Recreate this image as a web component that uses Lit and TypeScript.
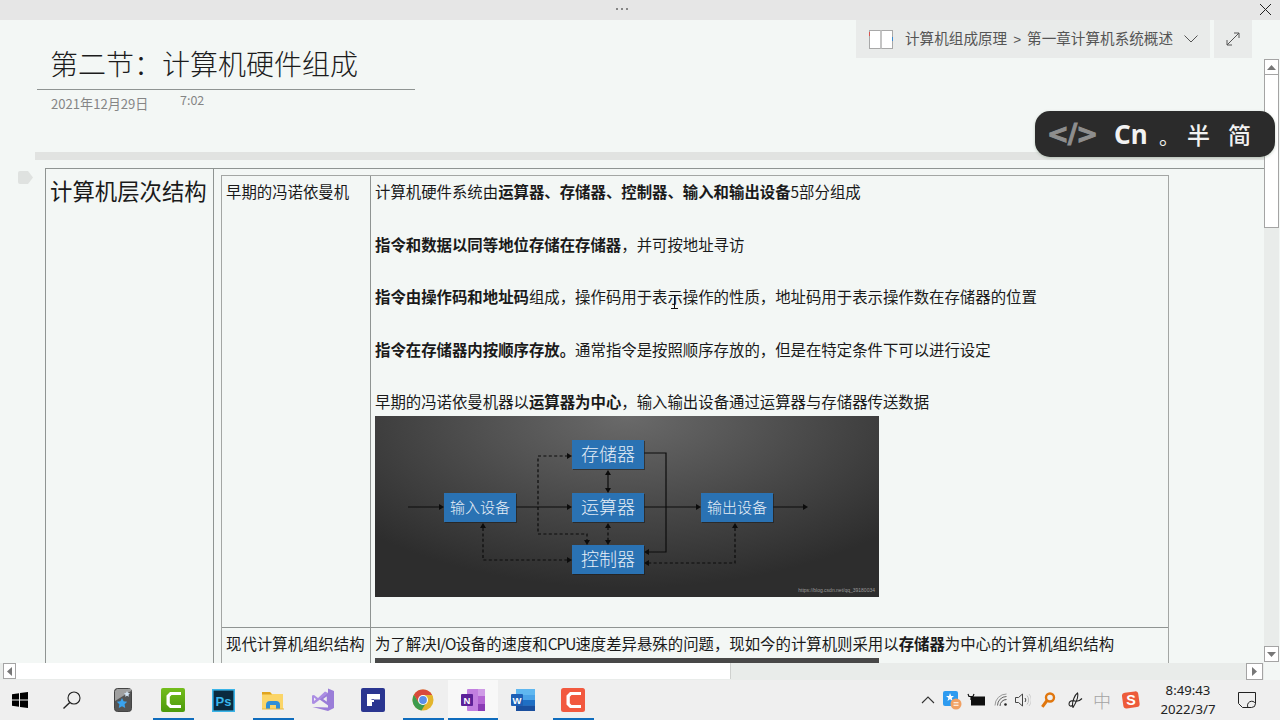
import { LitElement, html, css, svg } from "lit";
import { customElement } from "lit/decorators.js";

const box = (x: number, y: number, label: string, size: number) => svg`
  <rect x=${x + 1} y=${y + 1} width="72" height="29" fill="#1c1c1c" opacity=".6"></rect>
  <rect x=${x} y=${y} width="72" height="29" fill="#2a72b3"></rect>
  <text x=${x + 36} y=${y + 14.5 + size * 0.36} font-size=${size} text-anchor="middle" fill="#e6eef7" class="dt">${label}</text>`;

const tri = (x: number, y: number, d: "r" | "l" | "u" | "d") => {
  const p =
    d === "r" ? `${x},${y} ${x - 5},${y - 3} ${x - 5},${y + 3}` :
    d === "l" ? `${x},${y} ${x + 5},${y - 3} ${x + 5},${y + 3}` :
    d === "u" ? `${x},${y} ${x - 3},${y + 5} ${x + 3},${y + 5}` :
    `${x},${y} ${x - 3},${y - 5} ${x + 3},${y - 5}`;
  return svg`<polygon points=${p} fill="#0c0c0c"></polygon>`;
};

const diagram = svg`
<svg class="dg" viewBox="0 0 504 181" width="504" height="181">
  <g fill="none" stroke="#0c0c0c" stroke-width="1.2">
    <path d="M33 91H66M140 91H193M269 91H322M397 91H429"></path>
    <path d="M269 37H291V136H273"></path>
    <path d="M233 57V73"></path>
  </g>
  <g fill="none" stroke="#0c0c0c" stroke-width="1.2" stroke-dasharray="3 2.4">
    <path d="M193 40H163V118H212V125"></path>
    <path d="M233 111V125"></path>
    <path d="M108 112V144H193"></path>
    <path d="M360 112V147H273"></path>
  </g>
  ${tri(69, 91, "r")}${tri(197, 91, "r")}${tri(326, 91, "r")}${tri(433, 91, "r")}
  ${tri(197, 40, "r")}${tri(197, 144, "r")}${tri(269, 136, "l")}${tri(269, 147, "l")}
  ${tri(233, 54, "u")}${tri(233, 77, "d")}${tri(233, 107, "u")}${tri(233, 129, "d")}
  ${tri(212, 129, "d")}${tri(108, 107, "u")}${tri(360, 107, "u")}
  ${box(197, 24, "存储器", 18)}
  ${box(197, 77, "运算器", 18)}
  ${box(197, 129, "控制器", 18)}
  ${box(69, 77, "输入设备", 15)}
  ${box(326, 77, "输出设备", 15)}
  <text x="500" y="176" font-size="5" text-anchor="end" fill="#9a9a9a" class="wm">https://blog.csdn.net/qq_39180034</text>
</svg>`;

const iWin = svg`<svg width="18" height="18" viewBox="0 0 18 18"><path fill="#000" d="M1 3.2 8 2.2V8.4H1ZM9 2 17 .9V8.4H9ZM1 9.6H8V15.8L1 14.8ZM9 9.6H17V17.1L9 16Z"/></svg>`;
const iSearch = svg`<svg width="20" height="20" viewBox="0 0 20 20" fill="none" stroke="#222" stroke-width="1.1"><circle cx="12" cy="8" r="6"/><path d="M7.8 12.4 1.5 18.6" stroke-width="1.4"/></svg>`;
const iStar = svg`<svg width="18" height="24" viewBox="0 0 18 24"><rect x=".5" y=".5" width="17" height="23" rx="3" fill="#555" stroke="#444"/><path d="M1 13 17 3V1H3L1 3Z" fill="#a0a0a0"/><path d="M13 3l1 2 2 .3-1.500 1.400.4 2-1.900-1-1.900 1 .4-2L10 5.300l2-.3Z" fill="#d2e3f2"/><path d="M8 10l1.600 3.300 3.600.5-2.600 2.500.6 3.600L8 18.200l-3.200 1.700.6-3.600-2.600-2.500 3.600-.5Z" fill="#3aa3ee"/></svg>`;
const iCamG = svg`<svg width="24" height="24" viewBox="0 0 24 24"><defs><linearGradient id="cg" x1="0" y1="0" x2="0" y2="1"><stop offset="0" stop-color="#74bd1c"/><stop offset="1" stop-color="#4c9a0c"/></linearGradient></defs><rect width="24" height="24" rx="2" fill="url(#cg)"/><path d="M20 4H9L5.500 7.500V16.500L9 20H20V17H10.500L8.800 15.300V8.700L10.500 7H20Z" fill="#fff"/></svg>`;
const iPs = svg`<svg width="23" height="23" viewBox="0 0 23 23"><rect x=".8" y=".8" width="21.400" height="21.400" fill="#0a2a3f" stroke="#3ab4e8" stroke-width="1.600"/><text x="11.500" y="16.500" font-size="13" text-anchor="middle" fill="#38b6ec" class="ps">Ps</text></svg>`;
const iFolder = svg`<svg width="22" height="19" viewBox="0 0 22 19"><path d="M0 2a1 1 0 0 1 1-1H8L10 3H21V18H0Z" fill="#fbd568"/><path d="M0 1H8L10 3.500H0Z" fill="#e0a41f"/><path d="M4 14a4 4 0 0 1 4-4H14a4 4 0 0 1 4 4V18H14V14H8V18H4Z" fill="#2f8fd8"/><rect x="0" y="17.500" width="22" height="1" fill="#eab93f"/></svg>`;
const iVs = svg`<svg width="24" height="24" viewBox="0 0 24 24"><path d="M17 .5 23 3V20L17 23 1.500 19 17 19.500Z" fill="#9a7dd8"/><path d="M17 6V16L10 11Z" fill="none" stroke="#9a7dd8" stroke-width="2.400"/><path d="M1 7.500 3 7 7 10 14 3.500 17 5 7 13 3 16 1 15.500Z" fill="#ab8de3"/><path d="M3 9.500V13L5 11.200Z" fill="#f4f4f4"/></svg>`;
const iFlag = svg`<svg width="24" height="24" viewBox="0 0 24 24"><rect width="24" height="24" rx="2" fill="#2a3590"/><path d="M6 6H19V11.500H13V14H11V18H6Z" fill="#fff"/><path d="M10.500 11H13V11.800H10.500Z" fill="#2a3590"/></svg>`;
const iChrome = svg`<svg width="22" height="22" viewBox="0 0 22 22"><circle cx="11" cy="11" r="10.500" fill="#e3b52d"/><path d="M11 .5A10.500 10.500 0 0 0 1.900 5.750L6.500 13.500 11 6H20.100A10.500 10.500 0 0 0 11 .5Z" fill="#d94a3c"/><path d="M1.900 5.750A10.500 10.500 0 0 0 9.500 21.400L14 14 6.500 13.500Z" fill="#3d9b4d"/><circle cx="11" cy="11" r="5" fill="#fff"/><circle cx="11" cy="11" r="3.900" fill="#5b8fe8"/></svg>`;
const iOne = svg`<svg width="24" height="22" viewBox="0 0 24 22"><rect x="6" y="0" width="18" height="22" rx="1" fill="#c27fe0"/><rect x="17" y="0" width="7" height="7" fill="#cf9be6"/><rect x="17" y="7" width="7" height="8" fill="#b465d4"/><rect x="17" y="15" width="7" height="7" fill="#8a3bb5"/><rect x="0" y="5" width="12" height="12" rx="1" fill="#5d2199"/><text x="6" y="14.500" font-size="9.500" text-anchor="middle" fill="#fff" class="tile">N</text></svg>`;
const iWord = svg`<svg width="24" height="22" viewBox="0 0 24 22"><rect x="5" y="0" width="19" height="22" rx="1" fill="#4aa3e8"/><rect x="5" y="0" width="19" height="6" fill="#5fb7f0"/><rect x="5" y="11" width="19" height="5.500" fill="#1f6fc4"/><rect x="5" y="16.500" width="19" height="5.500" fill="#1a4f9e"/><rect x="0" y="5" width="12" height="12" rx="1" fill="#1d5fb5"/><text x="6" y="14.500" font-size="9.500" text-anchor="middle" fill="#fff" class="tile">W</text></svg>`;
const iCamR = svg`<svg width="24" height="24" viewBox="0 0 24 24"><rect width="24" height="24" rx="2.500" fill="#f2593f"/><path d="M20 4H9L5.500 7.500V16.500L9 20H20V17H10.500L8.800 15.300V8.700L10.500 7H20Z" fill="#fff"/></svg>`;

const tChev = svg`<svg width="14" height="8" viewBox="0 0 14 8" fill="none" stroke="#333" stroke-width="1.100"><path d="M1 7 7 1 13 7"/></svg>`;
const tBlue = svg`<svg width="19" height="19" viewBox="0 0 19 19"><rect width="15" height="15" rx="2" fill="#2e9bf0"/><path d="M7 2l1.200 3H11L8.700 7l1 3L7 8.200 4.500 10l.9-3L3 5h3Z" fill="#fff"/><circle cx="13" cy="13" r="5.500" fill="#f0a063"/><path d="M10.500 11.800H15.500M10.500 14.200H15.500" stroke="#fff" stroke-width="1.100"/></svg>`;
const tBat = svg`<svg width="18" height="14" viewBox="0 0 18 14"><rect x="4" y="3.500" width="14" height="9" fill="#0f0f0f"/><path d="M1 1 2 3.500H6L7 1M4 3.500V7" stroke="#111" stroke-width="1.200" fill="none"/></svg>`;
const tWifi = svg`<svg width="14" height="14" viewBox="0 0 14 14" fill="none" stroke="#666" stroke-width="1"><path d="M1 12.500A11.500 11.500 0 0 1 12.500 1" stroke="#999"/><path d="M3.500 12.500A9 9 0 0 1 12.500 3.500" stroke="#666"/><path d="M6 13A6.500 6.500 0 0 1 12.500 6.500" stroke="#555"/><circle cx="11.500" cy="11.500" r="1.300" fill="#222" stroke="none"/></svg>`;
const tVol = svg`<svg width="16" height="14" viewBox="0 0 16 14" fill="none" stroke="#444" stroke-width="1"><path d="M.5 4.500H3.500L7.500 1V13L3.500 9.500H.5Z"/><path d="M10 5A3 3 0 0 1 10 9"/><path d="M12 2.500A7 7 0 0 1 12 11.500" stroke="#bbb"/><path d="M14 1A9 9 0 0 1 14 13" stroke="#ccc"/></svg>`;
const tKey = svg`<svg width="16" height="17" viewBox="0 0 15 17" fill="none" stroke="#e0760e" stroke-width="2.400"><circle cx="9.500" cy="5.500" r="4"/><path d="M6.500 8.500 1.800 14.800" stroke-width="3"/></svg>`;
const tPen = svg`<svg width="15" height="16" viewBox="0 0 15 16" fill="none" stroke="#222" stroke-width="1.100"><path d="M5 15.500C3 9 8 2 9.500 1 10.500 4 9 9 5 15.500ZM1 12C1 9 4 8 7 9 10 10 12 8.500 14 6.500M1 12C1 14 3 15 5 13"/></svg>`;
const tZh = html`<span class="zh">中</span>`;
const tSogou = svg`<svg width="18" height="18" viewBox="0 0 17 17"><rect x=".5" y="1" width="15.500" height="15" rx="3" transform="rotate(-8 8 8)" fill="#ed5b3a"/><text x="8.500" y="13.500" font-size="13.500" text-anchor="middle" fill="#fff" class="sg">S</text></svg>`;
const tNote = svg`<svg width="18" height="17" viewBox="0 0 18 17" fill="none" stroke="#222" stroke-width="1"><path d="M.5.500H17.500V11.500A4 4 0 0 1 13.500 15.500H4.500L.5 11.500Z"/><path d="M10 15.500A3.500 3.500 0 0 1 17.500 11.500"/></svg>`;

@customElement("app-root")
export class AppRoot extends LitElement {
  static styles = css`
    :host { display: block; width: 1280px; height: 720px; position: relative; overflow: hidden;
      font-family: "Noto Sans CJK SC", "Liberation Sans", sans-serif; color: #1a1a1a; background: #f3f7f5; }
    .frame { display: grid; grid-template-rows: 20px 1fr 40px; height: 720px; }
    .topbar { background: #e6e6e6; display: flex; justify-content: center; align-items: center; position: relative; }
    .dots { display: flex; gap: 3px; margin-left: -36px; margin-top: -2px; }
    .dots i { width: 2px; height: 2px; background: #666; border-radius: 50%; }
    .close { position: absolute; right: 8px; top: 3px; width: 13px; height: 13px; }
    .mid { display: flex; min-height: 0; }
    .left { flex: 1; min-width: 0; display: flex; flex-direction: column; }
    .page { flex: 1; min-height: 0; overflow: hidden; position: relative; }
    .head { margin-left: 37px; width: 378px; padding: 20px 0 0 13px; box-sizing: border-box; border-bottom: 1px solid #8f9492; height: 70px; }
    .title { font-size: 28px; font-weight: 300; line-height: 46px; color: #1c1c1c; }
    .meta { margin-left: 51px; display: flex; font-size: 13.1px; color: #858585; height: 62px; }
    .date { width: 129px; padding-top: 5px; line-height: 18px; }
    .time { line-height: 20px; font-size: 12.5px; }
    .note { margin-left: 35px; }
    .grip { height: 8px; background: #e1e3e1; }
    .outer { margin: 8px 0 0 10px; border-left: 1px solid #8f9492; border-top: 1px solid #8f9492; display: grid; grid-template-columns: 168px 1fr; }
    .tag { position: absolute; left: 18px; top: 151px; }
    .sec { border-right: 1px solid #8f9492; font-size: 22.4px; padding: 4px 0 0 4px; line-height: 34px; height: 520px; box-sizing: border-box; white-space: nowrap; }
    .holder { padding: 6px 0 0 7px; }
    .inner { width: 948px; box-sizing: border-box; border: 1px solid #a3a6a4; border-bottom: 0; display: grid; grid-template-columns: 149px 1fr; font-size: 15.4px; line-height: 26.25px; white-space: nowrap; }
    .lab { border-right: 1px solid #8f9492; padding: 2px 0 0 4px; }
    .cell { padding: 2px 0 0 4px; }
    .rowline { border-top: 1px solid #8f9492; }
    .cell p { margin: 0 0 26.25px; }
    .cell p.last { margin: 0; }
    .cell b { font-weight: 700; }
    .nar { letter-spacing: -1px; }
    .shot { display: block; width: 504px; height: 181px; margin: 2px 0 30px; background: radial-gradient(ellipse 70% 95% at 50% 0, #6a6a6a, #454545 60%, #2d2d2d 100%); }
    .shot2 { width: 504px; height: 60px; background: #484848; margin-top: 1px; }
    .dg { display: block; }
    .dt { font-family: "Noto Sans CJK SC", sans-serif; font-weight: 300; }
    .wm { font-family: "Liberation Sans", sans-serif; }
    .ps, .tile, .sg { font-family: "Liberation Sans", sans-serif; font-weight: 700; }
    .hbar { height: 17px; background: #e9ecea; display: flex; padding-left: 3px; box-sizing: border-box; }
    .btn { background: #fff; border: 1px solid #a4a4a4; box-sizing: border-box; display: flex; align-items: center; justify-content: center; }
    .hbtn { width: 13px; height: 16px; }
    .hthumb { width: 715px; height: 16px; background: #fff; border-right: 1px solid #cfd1cf; box-sizing: border-box; }
    .hgap { flex: 1; }
    .hend { width: 17px; height: 17px; margin-right: 1px; }
    .vbar { width: 16px; display: flex; flex-direction: column; padding: 39px 1px 18px 0; box-sizing: border-box; }
    .vtrack { flex: 1; display: flex; flex-direction: column; background: #e9ecea; }
    .vbtn { height: 16px; width: 15px; }
    .vthumb { height: 153px; width: 15px; background: #fff; border: 1px solid #a4a4a4; border-width: 0 1px 1px; box-sizing: border-box; }
    .vgap { flex: 1; }
    .crumb { position: absolute; left: 856px; top: 20px; width: 354px; height: 38px; background: #e9ebea; display: flex; align-items: center; padding-left: 13px; box-sizing: border-box; font-size: 14.6px; line-height: 36px; color: #555; white-space: nowrap; }
    .crumb .txt { margin-left: 12px; }
    .crumb svg.ch { margin-left: 11px; }
    .sep { margin: 0 6px; font-size: 13.5px; font-family: "Liberation Sans", sans-serif; }
    .expand { position: absolute; left: 1214px; top: 20px; width: 38px; height: 38px; background: #e9ebea; display: flex; align-items: center; justify-content: center; }
    .ime { position: absolute; left: 1035px; top: 111px; width: 240px; height: 46px; border-radius: 15px; background: #2b2b2b; color: #f2f2f2; display: flex; align-items: center; box-sizing: border-box; padding-left: 12px; box-shadow: 0 1px 3px rgba(90,120,90,.35); z-index: 3; white-space: nowrap; }
    .code { color: #8e8e8e; font-family: "DejaVu Sans", sans-serif; font-weight: 700; font-size: 26px; letter-spacing: -1px; width: 67px; -webkit-text-stroke: 1px #8e8e8e; }
    .cn { font-family: "Noto Sans", sans-serif; font-weight: 700; font-size: 26px; width: 45px; }
    .dot { font-size: 20px; width: 28px; margin-top: 4px; padding-left: 0; }
    .ban { font-size: 23px; font-weight: 500; width: 41px; }
    .cursor { position: absolute; left: 670px; top: 295px; z-index: 2; }
    .task { background: #efefef; display: flex; position: relative; }
    .slot { height: 40px; width: 50px; display: flex; align-items: center; justify-content: center; box-sizing: border-box; position: relative; }
    .slot.win { width: 40px; }
    .slot.find { width: 58px; padding-left: 6px; }
    .slot.on::after { content: ""; position: absolute; left: 5px; width: 41px; bottom: 0; height: 2px; background: #0f6cbd; }
    .slot.sel { background: #f8f8f8; }
    .slot.sel::after { left: 0; width: 50px; }
    .tray { margin-left: auto; display: grid; grid-template-columns: 24px 24px 24px 26px 18px 32px 22px 32px 26px 88px 30px; padding-right: 18px; height: 40px; align-items: center; justify-items: center; }
    .zh { font-size: 18px; color: #a4a4a4; font-weight: 300; }
    .clock { font-size: 13.2px; line-height: 19px; text-align: center; color: #222; font-family: "Noto Sans", sans-serif; }
  `;

  render() {
    return html`
      <div class="frame">
        <div class="topbar">
          <div class="dots"><i></i><i></i><i></i></div>
          <svg class="close" viewBox="0 0 13 13" fill="none" stroke="#222" stroke-width="1"><path d="M1 1 12 12M12 1 1 12"/></svg>
        </div>
        <div class="mid">
          <div class="left">
            <div class="page">
              <div class="head"><div class="title">第二节：计算机硬件组成</div></div>
              <div class="meta"><div class="date">2021年12月29日</div><div class="time">7:02</div></div>
              <svg class="tag" width="16" height="13" viewBox="0 0 16 13"><path d="M2 0H10L15 6.500 10 13H2Q0 13 0 11V2Q0 0 2 0Z" fill="#dfe2e0"/></svg>
              <div class="note">
                <div class="grip"></div>
                <div class="outer">
                  <div class="sec">计算机层次结构</div>
                  <div class="holder">
                    <div class="inner">
                      <div class="lab">早期的冯诺依曼机</div>
                      <div class="cell">
                        <p>计算机硬件系统由<b>运算器、存储器、控制器、输入和输出设备</b>5部分组成</p>
                        <p><b>指令和数据以同等地位存储在存储器</b>，并可按地址寻访</p>
                        <p><b>指令由操作码和地址码</b>组成，操作码用于表示操作的性质，地址码用于表示操作数在存储器的位置</p>
                        <p><b>指令在存储器内按顺序存放。</b>通常指令是按照顺序存放的，但是在特定条件下可以进行设定</p>
                        <p class="last">早期的冯诺依曼机器以<b>运算器为中心</b>，输入输出设备通过运算器与存储器传送数据</p>
                        <div class="shot">${diagram}</div>
                      </div>
                      <div class="lab rowline">现代计算机组织结构</div>
                      <div class="cell rowline">
                        <p class="last">为了解决<span class="nar">I/O</span>设备的速度和<span class="nar">CPU</span>速度差异悬殊的问题，现如今的计算机则采用以<b>存储器</b>为中心的计算机组织结构</p>
                        <div class="shot2"></div>
                      </div>
                    </div>
                  </div>
                </div>
              </div>
            </div>
            <div class="hbar">
              <div class="btn hbtn"><svg width="5" height="9" viewBox="0 0 5 9"><path d="M5 0V9L0 4.500Z" fill="#777"/></svg></div>
              <div class="hthumb"></div>
              <div class="hgap"></div>
              <div class="btn hend"><svg width="5" height="9" viewBox="0 0 5 9"><path d="M0 0V9L5 4.500Z" fill="#777"/></svg></div>
            </div>
          </div>
          <div class="vbar">
            <div class="vtrack">
              <div class="btn vbtn"><svg width="9" height="5" viewBox="0 0 9 5"><path d="M0 5H9L4.500 0Z" fill="#777"/></svg></div>
              <div class="vthumb"></div>
              <div class="vgap"></div>
              <div class="btn vbtn"><svg width="9" height="5" viewBox="0 0 9 5"><path d="M0 0H9L4.500 5Z" fill="#777"/></svg></div>
            </div>
          </div>
        </div>
        <div class="task">
          <div class="slot win">${iWin}</div>
          <div class="slot find">${iSearch}</div>
          <div class="slot">${iStar}</div>
          <div class="slot on">${iCamG}</div>
          <div class="slot">${iPs}</div>
          <div class="slot on">${iFolder}</div>
          <div class="slot">${iVs}</div>
          <div class="slot">${iFlag}</div>
          <div class="slot on">${iChrome}</div>
          <div class="slot on sel">${iOne}</div>
          <div class="slot">${iWord}</div>
          <div class="slot on">${iCamR}</div>
          <div class="tray">
            ${tChev}${tBlue}${tBat}${tWifi}${tVol}${tKey}${tPen}${tZh}${tSogou}
            <div class="clock">8:49:43<br />2022/3/7</div>
            ${tNote}
          </div>
        </div>
      </div>

      <div class="crumb">
        <svg width="24" height="19" viewBox="0 0 24 19"><rect x=".5" y=".5" width="23" height="18" fill="#fff" stroke="#a8a8a8"/><path d="M12 .5V18.500" stroke="#c4c4c4" stroke-width="2"/><path d="M.5 2V6" stroke="#d9534f"/><path d="M23.500 7V11" stroke="#3a8ad0"/></svg>
        <span class="txt">计算机组成原理<span class="sep">&gt;</span>第一章计算机系统概述</span>
        <svg class="ch" width="14" height="8" viewBox="0 0 14 8" fill="none" stroke="#555" stroke-width="1"><path d="M.5.500 7 7 13.500.500"/></svg>
      </div>
      <div class="expand">
        <svg width="14" height="14" viewBox="0 0 14 14" fill="none" stroke="#555" stroke-width="1"><path d="M1 13 13 1M8 1H13V6M1 8V13H6"/></svg>
      </div>
      <div class="ime">
        <span class="code">&lt;/&gt;</span>
        <span class="cn">Cn</span>
        <span class="dot">。</span>
        <span class="ban">半</span>
        <span class="ban">简</span>
      </div>
      <svg class="cursor" width="9" height="14" viewBox="0 0 9 14" fill="none" stroke="#111" stroke-width="1"><path d="M1 .5H8M4.500 .5V13.500M1 13.500H8"/></svg>
    `;
  }
}
